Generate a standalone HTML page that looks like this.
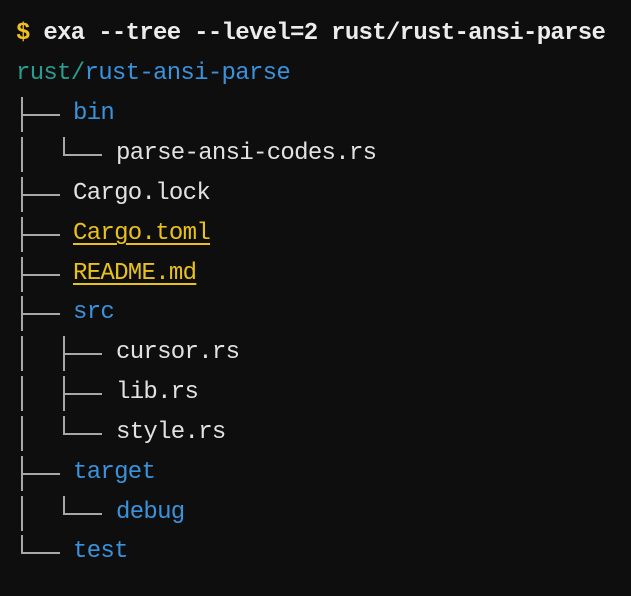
<!DOCTYPE html>
<html><head><meta charset="utf-8"><style>
html,body{margin:0;padding:0;background:#0e0e0e;width:631px;height:596px;overflow:hidden}
body{position:relative;font-family:"Liberation Mono",monospace;font-size:24px;letter-spacing:-0.7px}
.t{position:absolute;line-height:40px;height:40px;white-space:pre;color:#e2e2e2}
.v,.h{position:absolute;background:#a8a8a8}
.v{width:2px}
.h{height:2px}
.b{color:#3a92dc}
.y{color:#e8c11c;text-decoration:underline;text-underline-offset:4px;text-decoration-thickness:2px}
</style></head><body>
<div class="t" style="left:16px;top:14px;font-weight:bold;color:#ececec"><span style="color:#f0c020">$</span> exa --tree --level=2 rust/rust-ansi-parse</div>
<div class="t" style="left:16px;top:54px"><span style="color:#2a9d8f">rust/</span><span class="b">rust-ansi-parse</span></div>

<div class="t b" style="left:73px;top:94px">bin</div>
<div class="t" style="left:116px;top:134px">parse-ansi-codes.rs</div>
<div class="t" style="left:73px;top:174px">Cargo.lock</div>
<div class="t y" style="left:73px;top:214px">Cargo.toml</div>
<div class="t y" style="left:73px;top:254px">README.md</div>
<div class="t b" style="left:73px;top:293px">src</div>
<div class="t" style="left:116px;top:333px">cursor.rs</div>
<div class="t" style="left:116px;top:373px">lib.rs</div>
<div class="t" style="left:116px;top:413px">style.rs</div>
<div class="t b" style="left:73px;top:453px">target</div>
<div class="t b" style="left:116px;top:493px">debug</div>
<div class="t b" style="left:73px;top:532px">test</div>

<div class="v" style="left:21px;top:97px;height:35px"></div>
<div class="v" style="left:21px;top:137px;height:35px"></div>
<div class="v" style="left:21px;top:177px;height:35px"></div>
<div class="v" style="left:21px;top:217px;height:35px"></div>
<div class="v" style="left:21px;top:257px;height:35px"></div>
<div class="v" style="left:21px;top:296px;height:35px"></div>
<div class="v" style="left:21px;top:336px;height:35px"></div>
<div class="v" style="left:21px;top:376px;height:35px"></div>
<div class="v" style="left:21px;top:416px;height:35px"></div>
<div class="v" style="left:21px;top:456px;height:35px"></div>
<div class="v" style="left:21px;top:496px;height:35px"></div>
<div class="v" style="left:21px;top:535px;height:18px"></div>
<div class="h" style="left:21px;top:114px;width:39px"></div>
<div class="h" style="left:21px;top:194px;width:39px"></div>
<div class="h" style="left:21px;top:234px;width:39px"></div>
<div class="h" style="left:21px;top:274px;width:39px"></div>
<div class="h" style="left:21px;top:313px;width:39px"></div>
<div class="h" style="left:21px;top:473px;width:39px"></div>
<div class="h" style="left:21px;top:552px;width:39px"></div>
<div class="v" style="left:63px;top:137px;height:18px"></div>
<div class="h" style="left:63px;top:154px;width:39px"></div>
<div class="v" style="left:63px;top:336px;height:35px"></div>
<div class="h" style="left:63px;top:353px;width:39px"></div>
<div class="v" style="left:63px;top:376px;height:35px"></div>
<div class="h" style="left:63px;top:393px;width:39px"></div>
<div class="v" style="left:63px;top:416px;height:18px"></div>
<div class="h" style="left:63px;top:433px;width:39px"></div>
<div class="v" style="left:63px;top:496px;height:18px"></div>
<div class="h" style="left:63px;top:513px;width:39px"></div>
</body></html>
